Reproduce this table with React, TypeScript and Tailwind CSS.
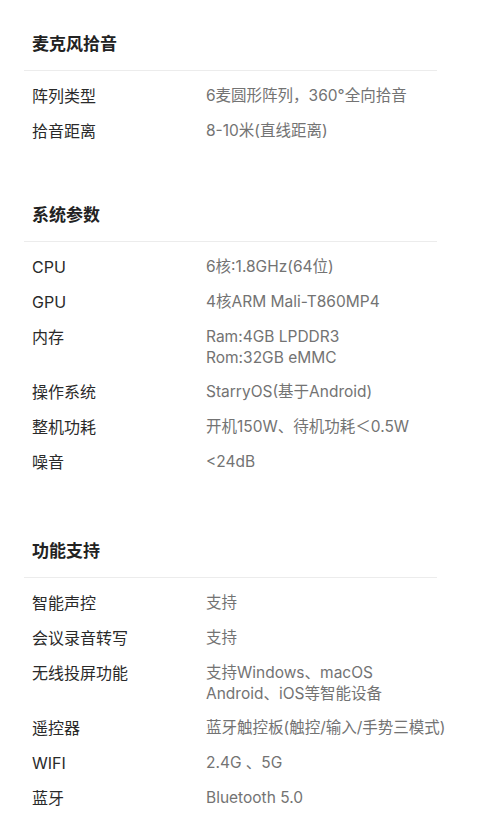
import React from "react";

type Row = { label: string; value: string[] };
type Section = { title: string; rows: Row[] };

const sections: Section[] = [
  {
    title: "麦克风拾音",
    rows: [
      { label: "阵列类型", value: ["6麦圆形阵列，360°全向拾音"] },
      { label: "拾音距离", value: ["8-10米(直线距离)"] },
    ],
  },
  {
    title: "系统参数",
    rows: [
      { label: "CPU", value: ["6核:1.8GHz(64位)"] },
      { label: "GPU", value: ["4核ARM Mali-T860MP4"] },
      { label: "内存", value: ["Ram:4GB LPDDR3", "Rom:32GB eMMC"] },
      { label: "操作系统", value: ["StarryOS(基于Android)"] },
      { label: "整机功耗", value: ["开机150W、待机功耗＜0.5W"] },
      { label: "噪音", value: ["<24dB"] },
    ],
  },
  {
    title: "功能支持",
    rows: [
      { label: "智能声控", value: ["支持"] },
      { label: "会议录音转写", value: ["支持"] },
      { label: "无线投屏功能", value: ["支持Windows、macOS", "Android、iOS等智能设备"] },
      { label: "遥控器", value: ["蓝牙触控板(触控/输入/手势三模式)"] },
      { label: "WIFI", value: ["2.4G 、5G"] },
      { label: "蓝牙", value: ["Bluetooth 5.0"] },
    ],
  },
];

const gaps = ["", "mt-[53px]", "mt-[58px]"];

export default function App() {
  return (
    <div
      className="w-[486px] min-h-[814px] bg-white pt-[31px] overflow-hidden"
      style={{ fontFamily: 'Inter, "Noto Sans CJK SC", sans-serif' }}
    >
      {sections.map((s, i) => (
        <div key={s.title} className={gaps[i]}>
          <div className="w-[413px] ml-6">
            <h2
              className="px-2 text-[17px] leading-[24px] font-bold text-[#222]"
              style={{ fontFamily: '"Noto Sans CJK SC", sans-serif' }}
            >
              {s.title}
            </h2>
            <div className="mt-[15px] h-px bg-[#ececec]" />
            <div className="mt-2">
              {s.rows.map((r) => (
                <div key={r.label} className="flex px-2 py-[7px]">
                  <div className="w-[174px] shrink-0 text-[16px] leading-[21px] text-[#2a2a2a]">
                    {r.label}
                  </div>
                  <div className="text-[15.5px] leading-[20.5px] text-[#737373] whitespace-nowrap">
                    {r.value.map((v) => (
                      <div key={v}>{v}</div>
                    ))}
                  </div>
                </div>
              ))}
            </div>
          </div>
        </div>
      ))}
    </div>
  );
}
